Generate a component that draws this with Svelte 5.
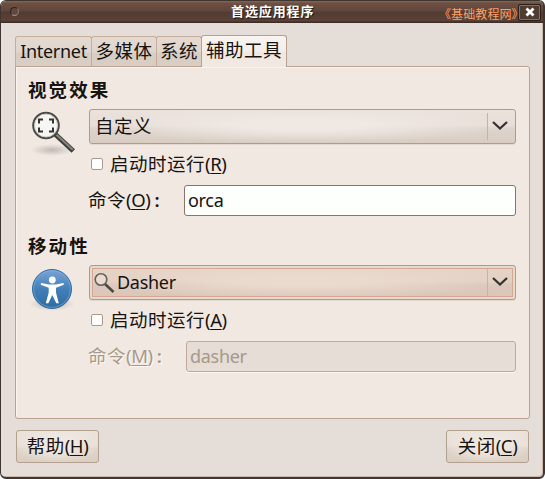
<script>
  const tabs = [
    { label: 'Internet', width: 77 },
    { label: '多媒体', width: 66 },
    { label: '系统', width: 46 },
    { label: '辅助工具', width: 86 }
  ];
  const sections = [
    { title: '视觉效果', icon: 'zoom', choice: '自定义', runKey: 'R', cmdKey: 'O', command: 'orca', disabled: false },
    { title: '移动性', icon: 'access', choice: 'Dasher', runKey: 'A', cmdKey: 'M', command: 'dasher', disabled: true }
  ];
  let active = $state(3);
</script>

<div class="window">
  <header>
    <i class="menu-dot"></i>
    <h1>首选应用程序</h1>
    <span class="site">《基础教程网》</span>
    <button class="close" aria-label="关闭">
      <svg width="10" height="10" viewBox="0 0 10 10"><path d="M1.5 1.5 8.5 8.5M8.5 1.5 1.5 8.5" stroke="#fff" stroke-width="2.8" /></svg>
    </button>
  </header>

  <main>
    <nav>
      {#each tabs as tab, i}
        <button class="tab" class:active={i === active} style:width="{tab.width}px" onclick={() => (active = i)}><span class:latin={i === 0}>{tab.label}</span></button>
      {/each}
    </nav>

    <div class="pane">
      {#each sections as s}
        <section>
          <h2>{s.title}</h2>
          <div class="body">
            <div class="icon">
              {#if s.icon === 'zoom'}
                <svg width="48" height="48" viewBox="0 0 48 48">
                  <defs>
                    <radialGradient id="shade"><stop offset="0" stop-color="#000" stop-opacity=".2" /><stop offset="1" stop-color="#000" stop-opacity="0" /></radialGradient>
                  </defs>
                  <ellipse cx="23" cy="41" rx="21" ry="6" fill="url(#shade)" />
                  <path d="M26.500 25.500 44.300 42" stroke="#3e3e3c" stroke-width="5" />
                  <path d="M27.500 25.700 43.800 40.800" stroke="#858582" stroke-width="2" />
                  <circle cx="17" cy="16.500" r="12.700" fill="#f7f6f4" stroke="#4a4a48" stroke-width="2.200" />
                  <circle cx="17" cy="16.500" r="11.500" fill="none" stroke="#c9c9c5" stroke-width="1" />
                  <path d="M10 14.500V10.500H14M20 10.500H24V14.500M24 18.500V22.500H20M14 22.500H10V18.500" fill="none" stroke="#333" stroke-width="2" />
                </svg>
              {:else}
                <svg width="48" height="48" viewBox="0 0 48 48">
                  <defs>
                    <linearGradient id="blue" x1="0" y1="0" x2="0" y2="1"><stop offset="0" stop-color="#7aa4d6" /><stop offset=".5" stop-color="#427fb9" /><stop offset="1" stop-color="#2e6c9f" /></linearGradient>
                  </defs>
                  <ellipse cx="23" cy="39" rx="23" ry="7" fill="url(#shade)" />
                  <circle cx="23" cy="24" r="19.500" fill="url(#blue)" stroke="#2f6ca5" />
                  <circle cx="23" cy="24" r="18.300" fill="none" stroke="#86b0dc" stroke-width=".8" opacity=".7" />
                  <circle cx="23.300" cy="15" r="3.400" fill="#fff" />
                  <path d="M12 18 20 19.600H26.500L34.500 18 34.800 19.700 27 22.700V27.500L29.800 38.200H27.300L23.300 30 19.300 38.200H16.800L19.700 27.500V22.700L11.700 19.700Z" fill="#fff" />
                </svg>
              {/if}
            </div>
            <div class="fields">
              <button class="combo" class:focused={s.disabled}>
                {#if s.disabled}
                  <svg class="lens" width="22" height="22" viewBox="0 0 22 22"><path d="M12 12 20.500 20" stroke="#4b4943" stroke-width="2.600" /><circle cx="8" cy="7.500" r="5.800" fill="#e9dbd1" stroke="#64615b" stroke-width="1.600" /></svg>
                {/if}
                <span class="choice" class:latin={s.disabled}>{s.choice}</span>
                <span class="arrow"><svg width="16" height="10" viewBox="0 0 16 10"><path d="M1 1 8 7.500 15 1" fill="none" stroke="#35322f" stroke-width="2.300" /></svg></span>
              </button>
              <label class="check"><i></i><span>启动时运行<b>(<u>{s.runKey}</u>)</b></span></label>
              <div class="command" class:disabled={s.disabled}>
                <span class="caption">命令<b>(<u>{s.cmdKey}</u>)</b><em>:</em></span>
                <div class="entry latin">{s.command}</div>
              </div>
            </div>
          </div>
        </section>
      {/each}
    </div>

    <footer>
      <button class="action">帮助<b>(<u>H</u>)</b></button>
      <button class="action">关闭<b>(<u>C</u>)</b></button>
    </footer>
  </main>
</div>

<style>
  :global(body) { background: #fff; }
  * { box-sizing: border-box; }
  button { margin: 0; padding: 0; font: inherit; color: inherit; letter-spacing: inherit; }
  i, em { font-style: normal; }

  .window {
    width: 545px;
    height: 479px;
    overflow: hidden;
    display: flex;
    flex-direction: column;
    border: 1px solid #403631;
    border-bottom-width: 2px;
    border-right-width: 2px;
    border-radius: 6px;
    background: #e5ddd7;
    box-shadow: inset -1px -1px #c9b8a9;
    color: #161311;
    font: 18.5px/24px "Noto Sans", "Noto Sans CJK SC", sans-serif;
    letter-spacing: .5px;
    white-space: nowrap;
  }
  b { font-weight: 400; letter-spacing: -.4px; }
  u { text-decoration: underline; text-decoration-thickness: 1px; text-underline-offset: 2px; }
  .latin { font-size: 18px; letter-spacing: -.3px; }

  header {
    flex: none;
    height: 22px;
    display: grid;
    grid-template-columns: 100px 1fr 77px 23px;
    align-items: center;
    padding-right: 2px;
    background: linear-gradient(#80614f 0 1px, #6e5042 2px, #5f463b 10px, #513b32 11px, #5b4238 20px, #3e2d27 21px);
    color: #fff;
  }
  .menu-dot { width: 9px; height: 9px; margin: 0 0 1px 9px; border: 1px solid #2f211c; border-bottom-color: #a38c80; border-right-color: #907a6e; border-radius: 50%; background: #604a3f; }
  h1 { margin: 0 0 3px 130px; font: bold 13px/18px "Noto Sans CJK SC", sans-serif; letter-spacing: .9px; text-shadow: 1px 1px 1px #211713; }
  .site { color: #ffa064; font: 12px/18px "Noto Sans CJK SC", sans-serif; letter-spacing: .1px; margin: 4px 0 0 -2px; }
  .close { width: 23px; height: 17px; display: grid; place-items: center; border: 1px solid #2c211c; border-radius: 2px; background: #513c32; box-shadow: inset 0 0 0 1px #846d61; }

  main { padding: 13px 13px 0 14px; }
  nav { height: 30px; display: flex; align-items: flex-end; }
  .tab {
    height: 30px;
    margin-right: -1px;
    padding-bottom: 2px;
    border: 1px solid #c5ad9c;
    border-bottom: 0;
    border-radius: 3px 3px 0 0;
    background: linear-gradient(#e4dad2, #e0d6cd 15px, #d8cdc2 16px, #d9cec3);
  }
  .tab.active { height: 32px; z-index: 1; margin-bottom: -1px; padding-bottom: 3px; border-color: #b8a18f; background: linear-gradient(#f9f4f0, #f5efeb 14px, #f1e8e1 17px); }

  .pane { height: 353px; padding: 10px 13px 0 12px; border: 1px solid #b9a390; border-radius: 0 3px 3px 3px; background: #f1e8e1; box-shadow: inset 1px 1px #faf4ef; }
  section { height: 156px; }
  h2 { margin: 0; height: 32px; font: bold 18.5px/24px "Noto Sans CJK SC", sans-serif; letter-spacing: 2.1px; }
  .body { display: flex; }
  .icon { width: 61px; flex: none; }
  .icon svg { display: block; margin-left: 1px; }
  .fields { width: 427px; }

  .combo {
    width: 427px;
    height: 35px;
    display: flex;
    align-items: center;
    padding-left: 5px;
    border: 1px solid #ab9c8e;
    border-radius: 3px;
    background: radial-gradient(ellipse 50% 55% at 50% 45%, #efe8e3 30%, #efe8e300), linear-gradient(#eae2db, #e6ddd6 16px, #ded4cd 18px, #d9cdc2);
    box-shadow: 0 1px #e2d8cf;
    text-align: left;
  }
  .combo.focused {
    padding-left: 2px;
    background: radial-gradient(ellipse 50% 55% at 50% 45%, #ead9cd 30%, #ead9cd00), linear-gradient(#e5d4c7, #e2d0c3 16px, #dac8bd 18px, #ddc6b9);
    box-shadow: inset 0 0 0 2px #e4dad0, inset 0 0 0 3px #d7a68f, 0 1px #e2d8cf;
  }
  .lens { margin: 0 2px 0 1px; }
  .choice { flex: 1; padding-bottom: 2px; }
  .arrow { width: 28px; height: 27px; display: grid; place-items: center; padding: 0 3px 1px 0; border-left: 1px solid #cbb2a0; }

  .check { height: 41px; display: flex; align-items: center; padding-left: 2px; }
  .check i { width: 12px; height: 12px; margin: 0 7px 1px 0; border: 1px solid #ac998b; border-radius: 2px; background: #fff; }
  .check span { padding-bottom: 2px; }
  .command { display: flex; height: 31px; align-items: center; }
  .caption { width: 96px; flex: none; margin-left: -1px; padding-bottom: 2px; }
  em { margin-left: 4px; font-weight: 600; }
  .entry { flex: 1; height: 31px; padding-left: 3px; line-height: 28px; border: 1px solid #887469; border-radius: 3px; background: #fdfffc; }
  .disabled { color: #a7998a; text-shadow: 1px 1px #fff8f2; }
  .disabled .caption { width: 98px; }
  .disabled .entry { border-color: #c1aa99; background: #e5ddd6; box-shadow: 0 1px #fff8f2; text-shadow: none; }

  footer { display: flex; justify-content: space-between; padding: 11px 1px 0 1px; }
  .action {
    width: 83px;
    height: 33px;
    padding: 0 0 2px;
    border: 1px solid #b3a190;
    border-radius: 3px;
    background: radial-gradient(ellipse 55% 60% at 50% 45%, #f0e9e3 30%, #f0e9e300), linear-gradient(#ebe3db, #e7ded5 15px, #dfd4ca 17px, #dbcec1);
  }
</style>
